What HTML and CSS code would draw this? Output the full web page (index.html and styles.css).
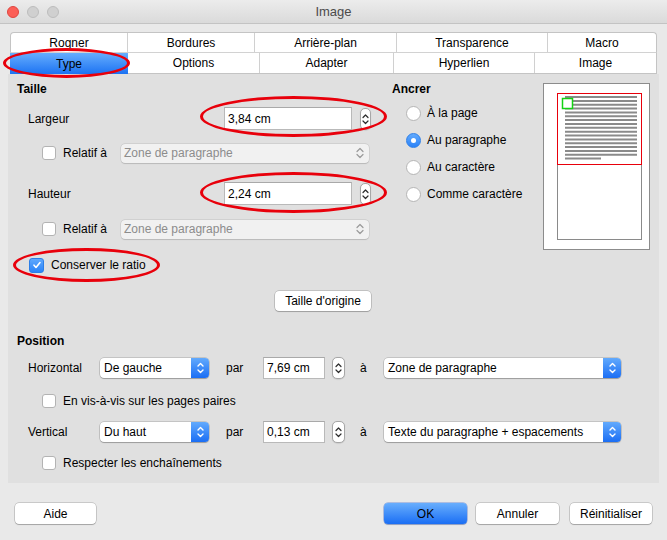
FILE: index.html
```html
<!DOCTYPE html>
<html lang="fr">
<head>
<meta charset="utf-8">
<title>Image</title>
<link rel="stylesheet" href="styles.css">
</head>
<body>
<div class="window">
  <div class="titlebar">
    <div class="lights"><span class="light red"></span><span class="light"></span><span class="light"></span></div>
    <div class="title">Image</div>
    <div></div>
  </div>

  <div class="tabs">
    <div class="tabrow top">
      <div class="tab w118">Rogner</div>
      <div class="tab w127">Bordures</div>
      <div class="tab w142">Arrière-plan</div>
      <div class="tab w151">Transparence</div>
      <div class="tab last">Macro</div>
    </div>
    <div class="tabrow bottom">
      <div class="tab w118 active">Type</div>
      <div class="tab w132">Options</div>
      <div class="tab w134">Adapter</div>
      <div class="tab w141">Hyperlien</div>
      <div class="tab last">Image</div>
    </div>
  </div>

  <div class="panel">
    <div class="topsec">
      <div class="leftcol">
        <div class="hdr">Taille</div>
        <div class="row r-larg">
          <span class="lbl lbl-size">Largeur</span>
          <div class="field w128">3,84 cm</div>
          <div class="spin s11"><svg width="9" height="20" viewBox="0 0 9 20"><polyline points="2,8.5 4.5,6 7,8.5" class="chev"/><polyline points="2,12 4.5,14.5 7,12" class="chev"/></svg></div>
        </div>
        <div class="row r-rel">
          <span class="cb"></span>
          <span class="cblbl rel">Relatif à</span>
          <div class="select disabled w248"><span class="seltext">Zone de paragraphe</span><svg width="10" height="16" viewBox="0 0 10 16"><polyline points="2,6.5 5,3.5 8,6.5" class="chev gray"/><polyline points="2,9.5 5,12.5 8,9.5" class="chev gray"/></svg></div>
        </div>
        <div class="row r-haut">
          <span class="lbl lbl-size">Hauteur</span>
          <div class="field w128">2,24 cm</div>
          <div class="spin s11"><svg width="9" height="20" viewBox="0 0 9 20"><polyline points="2,8.5 4.5,6 7,8.5" class="chev"/><polyline points="2,12 4.5,14.5 7,12" class="chev"/></svg></div>
        </div>
        <div class="row r-rel2">
          <span class="cb"></span>
          <span class="cblbl rel">Relatif à</span>
          <div class="select disabled w248"><span class="seltext">Zone de paragraphe</span><svg width="10" height="16" viewBox="0 0 10 16"><polyline points="2,6.5 5,3.5 8,6.5" class="chev gray"/><polyline points="2,9.5 5,12.5 8,9.5" class="chev gray"/></svg></div>
        </div>
        <div class="row r-ratio">
          <span class="cb checked"><svg width="10" height="10" viewBox="0 0 10 10"><polyline points="2,5.2 4,7.5 8,2.5" fill="none" stroke="#fff" stroke-width="1.6" stroke-linecap="round" stroke-linejoin="round"/></svg></span>
          <span class="cblbl ratio">Conserver le ratio</span>
        </div>
        <div class="row r-btn">
          <div class="btn orig">Taille d'origine</div>
        </div>
      </div>

      <div class="anchor">
        <div class="hdr">Ancrer</div>
        <div class="radio-row first"><span class="radio"></span><span class="rlbl">À la page</span></div>
        <div class="radio-row"><span class="radio on"></span><span class="rlbl">Au paragraphe</span></div>
        <div class="radio-row"><span class="radio"></span><span class="rlbl">Au caractère</span></div>
        <div class="radio-row"><span class="radio"></span><span class="rlbl">Comme caractère</span></div>
      </div>

      <div class="preview">
        <svg width="105" height="165" viewBox="0 0 105 165">
          <rect x="13.5" y="9.5" width="84" height="146" fill="#fff" stroke="#8a8a8a" stroke-width="1"/>
          <g stroke="#8a8a8a" stroke-width="2">
            <line x1="21" y1="13" x2="93" y2="13"/>
            <line x1="21" y1="16.9" x2="93" y2="16.9"/>
            <line x1="21" y1="20.7" x2="93" y2="20.7"/>
            <line x1="21" y1="24.6" x2="93" y2="24.6"/>
            <line x1="21" y1="28.4" x2="93" y2="28.4"/>
            <line x1="21" y1="32.3" x2="93" y2="32.3"/>
            <line x1="21" y1="36.1" x2="93" y2="36.1"/>
            <line x1="21" y1="40" x2="93" y2="40"/>
            <line x1="21" y1="43.8" x2="93" y2="43.8"/>
            <line x1="21" y1="47.7" x2="93" y2="47.7"/>
            <line x1="21" y1="51.5" x2="93" y2="51.5"/>
            <line x1="21" y1="55.4" x2="93" y2="55.4"/>
            <line x1="21" y1="59.2" x2="93" y2="59.2"/>
            <line x1="21" y1="63.1" x2="93" y2="63.1"/>
            <line x1="21" y1="66.9" x2="93" y2="66.9"/>
            <line x1="21" y1="70.8" x2="93" y2="70.8"/>
            <line x1="21" y1="74.6" x2="57" y2="74.6"/>
          </g>
          <rect x="13.5" y="9.5" width="84" height="71" fill="none" stroke="#e8000b" stroke-width="1"/>
          <rect x="18.5" y="14.5" width="10" height="10" fill="#fff" stroke="#14d214" stroke-width="1.5"/>
        </svg>
      </div>
    </div>

    <div class="hdr pos">Position</div>
    <div class="prow r-hor">
      <span class="plbl">Horizontal</span>
      <div class="select w109"><span class="seltext">De gauche</span><span class="blue"><svg width="9" height="16" viewBox="0 0 9 16"><polyline points="2,6 4.5,3.5 7,6" class="chev white"/><polyline points="2,10 4.5,12.5 7,10" class="chev white"/></svg></span></div>
      <span class="par">par</span>
      <div class="field w62">7,69 cm</div>
      <div class="spin s13"><svg width="11" height="20" viewBox="0 0 11 20"><polyline points="3,8.5 5.5,6 8,8.5" class="chev"/><polyline points="3,12 5.5,14.5 8,12" class="chev"/></svg></div>
      <span class="a">à</span>
      <div class="select w237"><span class="seltext">Zone de paragraphe</span><span class="blue"><svg width="9" height="16" viewBox="0 0 9 16"><polyline points="2,6 4.5,3.5 7,6" class="chev white"/><polyline points="2,10 4.5,12.5 7,10" class="chev white"/></svg></span></div>
    </div>
    <div class="prow r-vis">
      <span class="cb"></span>
      <span class="cblbl">En vis-à-vis sur les pages paires</span>
    </div>
    <div class="prow r-ver">
      <span class="plbl">Vertical</span>
      <div class="select w109"><span class="seltext">Du haut</span><span class="blue"><svg width="9" height="16" viewBox="0 0 9 16"><polyline points="2,6 4.5,3.5 7,6" class="chev white"/><polyline points="2,10 4.5,12.5 7,10" class="chev white"/></svg></span></div>
      <span class="par">par</span>
      <div class="field w62">0,13 cm</div>
      <div class="spin s13"><svg width="11" height="20" viewBox="0 0 11 20"><polyline points="3,8.5 5.5,6 8,8.5" class="chev"/><polyline points="3,12 5.5,14.5 8,12" class="chev"/></svg></div>
      <span class="a">à</span>
      <div class="select w237"><span class="seltext">Texte du paragraphe + espacements</span><span class="blue"><svg width="9" height="16" viewBox="0 0 9 16"><polyline points="2,6 4.5,3.5 7,6" class="chev white"/><polyline points="2,10 4.5,12.5 7,10" class="chev white"/></svg></span></div>
    </div>
    <div class="prow r-resp">
      <span class="cb"></span>
      <span class="cblbl">Respecter les enchaînements</span>
    </div>
  </div>

  <div class="footer">
    <div class="btn fbtn w81">Aide</div>
    <div class="spacer"></div>
    <div class="btn fbtn primary w83">OK</div>
    <div class="btn fbtn w83 g9">Annuler</div>
    <div class="btn fbtn w82 g11">Réinitialiser</div>
  </div>

  <div class="ellipse e-type"></div>
  <div class="ellipse e-larg"></div>
  <div class="ellipse e-haut"></div>
  <div class="ellipse e-ratio"></div>
</div>
</body>
</html>
```

FILE: styles.css
```css
* { box-sizing: border-box; }
html, body { margin: 0; padding: 0; }
body {
  width: 667px;
  height: 540px;
  overflow: hidden;
  font-family: "Liberation Sans", Arial, sans-serif;
  font-size: 12px;
  color: #000;
  background: #e9e9e9;
}
.window {
  position: relative;
  width: 667px;
  height: 540px;
  background: #e9e9e9;
}

/* title bar */
.titlebar {
  height: 24px;
  display: grid;
  grid-template-columns: 1fr auto 1fr;
  align-items: center;
  background: linear-gradient(#ececec, #dadada);
  border-bottom: 1px solid #c3c3c3;
}
.lights { display: flex; gap: 8px; padding-left: 7px; }
.light {
  width: 12px; height: 12px; border-radius: 50%;
  background: #d0d0d0; border: 1px solid #bdbdbd;
}
.light.red { background: #fc5f57; border-color: #df4640; }
.title { font-size: 13px; color: #4b4b4b; }

/* tabs */
.tabs { margin: 8px 0 0 10px; width: 647px; }
.tabrow { display: flex; height: 21px; background: #fff; }
.tabrow.top { border: 1px solid #c4c4c4; border-radius: 4px 4px 0 0; border-bottom-color: #d2d2d2; }
.tabrow.bottom { border: 1px solid #c4c4c4; border-top: none; height: 21px; }
.tab {
  display: flex; align-items: center; justify-content: center;
  border-right: 1px solid #d0d0d0;
  height: 100%;
}
.tab.last { flex: 1; border-right: none; }
.tab.active {
  background: linear-gradient(#66adfd, #1c73f3);
  margin-left: -1px;
  margin-bottom: -1px;
  height: 21px;
  border-right: none;
}
.w118 { width: 118px; }
.tabrow.top .w118 { width: 117px; }
.w127 { width: 127px; }
.w142 { width: 142px; }
.w151 { width: 151px; }
.w132 { width: 132px; }
.w134 { width: 134px; }
.w141 { width: 141px; }

/* panel */
.panel {
  margin-left: 8px;
  width: 651px;
  height: 409px;
  background: #e0e0e0;
  padding-left: 9px;
}
.topsec { display: flex; height: 237px; }
.leftcol { width: 375px; }
.hdr { font-weight: bold; height: 14px; line-height: 14px; margin-top: 8px; }
.hdr.pos { margin-top: 23px; }
.row { display: flex; align-items: center; }
.r-larg { margin-top: 11px; height: 23px; }
.r-rel { margin-top: 13px; height: 20px; }
.r-haut { margin-top: 19px; height: 23px; }
.r-rel2 { margin-top: 14px; height: 20px; }
.r-ratio { margin-top: 18px; height: 16px; }
.r-btn { margin-top: 18px; height: 20px; }

.lbl-size { margin-left: 11px; width: 196px; }

.field {
  height: 23px;
  background: #fff;
  border: 1px solid #b9b9b9;
  border-top-color: #a9a9a9;
  padding-left: 3px;
  display: flex; align-items: center;
}
.w128 { width: 128px; }
.w62 { width: 62px; height: 22px; }

.spin {
  height: 22px;
  background: #fff;
  border: 1px solid #a7a7a7;
  border-radius: 5px;
  display: flex; align-items: center; justify-content: center;
  box-shadow: 0 0.5px 1px rgba(0,0,0,0.15);
}
.s11 { width: 11px; margin-left: 8px; }
.s13 { width: 13px; margin-left: 7px; }
.chev { fill: none; stroke: #2c2c2c; stroke-width: 1.2; stroke-linecap: round; stroke-linejoin: round; }
.chev.gray { stroke: #9a9a9a; }
.chev.white { stroke: #fff; stroke-width: 1.4; }

.cb {
  width: 14px; height: 14px;
  background: #fff;
  border: 1px solid #b3b3b3;
  border-radius: 3px;
  margin-left: 25px;
  flex: none;
  display: flex; align-items: center; justify-content: center;
}
.cb.checked {
  margin-left: 12px;
  width: 15px; height: 15px;
  background: linear-gradient(#5fa8fd, #2a83f8);
  border-color: #2b7ee8;
}
.cblbl { margin-left: 7px; }
.cblbl.rel { width: 58px; }
.cblbl.ratio { margin-left: 7px; }

.select {
  height: 20px;
  background: #fff;
  border-radius: 4px;
  box-shadow: 0 0 0 0.5px rgba(0,0,0,0.25), 0 1px 1px rgba(0,0,0,0.2);
  display: flex; align-items: center;
  overflow: hidden;
}
.seltext { flex: 1; padding-left: 4px; white-space: nowrap; }
.select.disabled {
  height: 19px;
  background: #f1f1f1;
  box-shadow: 0 0 0 0.5px rgba(0,0,0,0.12), 0 0.5px 1px rgba(0,0,0,0.12);
  color: #8c8c8c;
}
.select.disabled svg { margin-right: 4px; }
.select.disabled .seltext { padding-left: 3px; }
.w248 { width: 248px; }
.w109 { width: 109px; }
.w237 { width: 237px; }
.blue {
  width: 18px; height: 100%;
  background: linear-gradient(#62aafd, #1b6ef4);
  display: flex; align-items: center; justify-content: center;
}

.btn {
  display: flex; align-items: center; justify-content: center;
  background: #fff;
  border-radius: 4px;
  box-shadow: 0 0 0 0.5px rgba(0,0,0,0.28), 0 1px 1px rgba(0,0,0,0.18);
}
.orig { margin-left: 258px; width: 96px; height: 20px; }

/* anchor */
.anchor { width: 151px; }
.radio-row { display: flex; align-items: center; height: 20px; margin-top: 7px; }
.radio-row.first { margin-top: 7px; }
.radio {
  width: 15px; height: 15px;
  border-radius: 50%;
  background: #fff;
  border: 1px solid #b5b5b5;
  margin-left: 14px;
  display: flex; align-items: center; justify-content: center;
}
.radio.on { background: linear-gradient(#62aafd, #2a82f8); border-color: #2d7fe8; }
.radio.on::after { content: ""; width: 5px; height: 5px; border-radius: 50%; background: #fff; }
.rlbl { margin-left: 6px; }

.preview {
  margin-top: 9px;
  width: 107px; height: 167px;
  background: #fff;
  border: 1px solid #8c8c8c;
}
.preview svg { display: block; }

/* position */
.prow { display: flex; align-items: center; }
.r-hor { margin-top: 9px; height: 22px; }
.r-vis { margin-top: 15px; height: 14px; }
.r-ver { margin-top: 13px; height: 22px; }
.r-resp { margin-top: 13px; height: 14px; }
.plbl { margin-left: 11px; width: 72px; }
.par { margin-left: 17px; width: 37px; }
.a { margin-left: 15px; width: 24px; }

/* footer */
.footer { display: flex; margin-top: 20px; padding: 0 15px; height: 21px; }
.spacer { flex: 1; }
.fbtn { height: 21px; }
.w81 { width: 81px; }
.w83 { width: 83px; }
.w82 { width: 82px; }
.g9 { margin-left: 9px; }
.g11 { margin-left: 11px; }
.primary { background: linear-gradient(#68aefd, #1a6ef4); box-shadow: 0 0 0 0.5px rgba(0,60,200,0.5), 0 1px 1px rgba(0,0,0,0.18); }

/* red annotation ellipses */
.ellipse {
  position: absolute;
  border: 3px solid #e8000b;
  border-radius: 50%;
  pointer-events: none;
}
.e-type { left: 3px; top: 48px; width: 127px; height: 30px; }
.e-larg { left: 200px; top: 96px; width: 187px; height: 41px; }
.e-haut { left: 200px; top: 172px; width: 187px; height: 41px; }
.e-ratio { left: 13px; top: 248px; width: 147px; height: 34px; }
```
